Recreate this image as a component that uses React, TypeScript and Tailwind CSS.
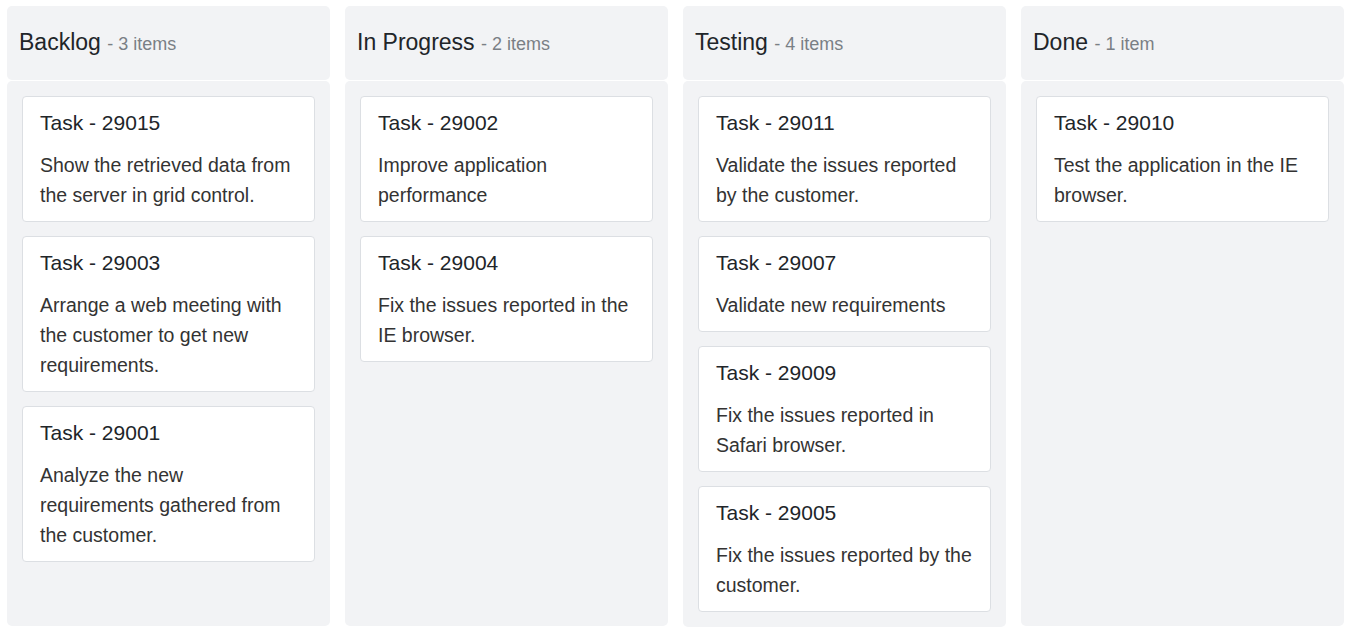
import React from "react";

type Card = { id: string; text: string };
type Col = { title: string; count: string; cards: Card[] };

const columns: Col[] = [
  {
    title: "Backlog",
    count: "3 items",
    cards: [
      { id: "Task - 29015", text: "Show the retrieved data from the server in grid control." },
      { id: "Task - 29003", text: "Arrange a web meeting with the customer to get new requirements." },
      { id: "Task - 29001", text: "Analyze the new requirements gathered from the customer." },
    ],
  },
  {
    title: "In Progress",
    count: "2 items",
    cards: [
      { id: "Task - 29002", text: "Improve application performance" },
      { id: "Task - 29004", text: "Fix the issues reported in the IE browser." },
    ],
  },
  {
    title: "Testing",
    count: "4 items",
    cards: [
      { id: "Task - 29011", text: "Validate the issues reported by the customer." },
      { id: "Task - 29007", text: "Validate new requirements" },
      { id: "Task - 29009", text: "Fix the issues reported in Safari browser." },
      { id: "Task - 29005", text: "Fix the issues reported by the customer." },
    ],
  },
  {
    title: "Done",
    count: "1 item",
    cards: [{ id: "Task - 29010", text: "Test the application in the IE browser." }],
  },
];

export default function App() {
  return (
    <div
      className="w-[1353px] h-[633px] bg-white pt-[6px] pb-[7px] pl-[7px] pr-[9px] flex gap-[15px]"
      style={{ fontFamily: '"Liberation Sans", Arial, sans-serif' }}
    >
      {columns.map((col) => (
        <div key={col.title} className="flex-1 flex flex-col gap-px">
          <div className="h-[74px] shrink-0 bg-[#f2f3f5] rounded-[5px] flex items-center pl-[12px] pr-[12px]">
            <div className="text-[23px] leading-[28px] text-[#212529] whitespace-nowrap">
              {col.title}{" "}
              <span className="text-[18px] text-[#7a7f85]">- {col.count}</span>
            </div>
          </div>
          <div className="flex-1 bg-[#f2f3f5] rounded-[5px] p-[15px] flex flex-col gap-[14px]">
            {col.cards.map((c) => (
              <div
                key={c.id}
                className="bg-white border border-[#dcdfe3] rounded-[4px] px-[17px] pt-[14px] pb-[11px]"
              >
                <div className="text-[21px] leading-[24px] text-[#212529] mb-[15px]">{c.id}</div>
                <div className="text-[19.5px] leading-[30px] text-[#333]">{c.text}</div>
              </div>
            ))}
          </div>
        </div>
      ))}
    </div>
  );
}
